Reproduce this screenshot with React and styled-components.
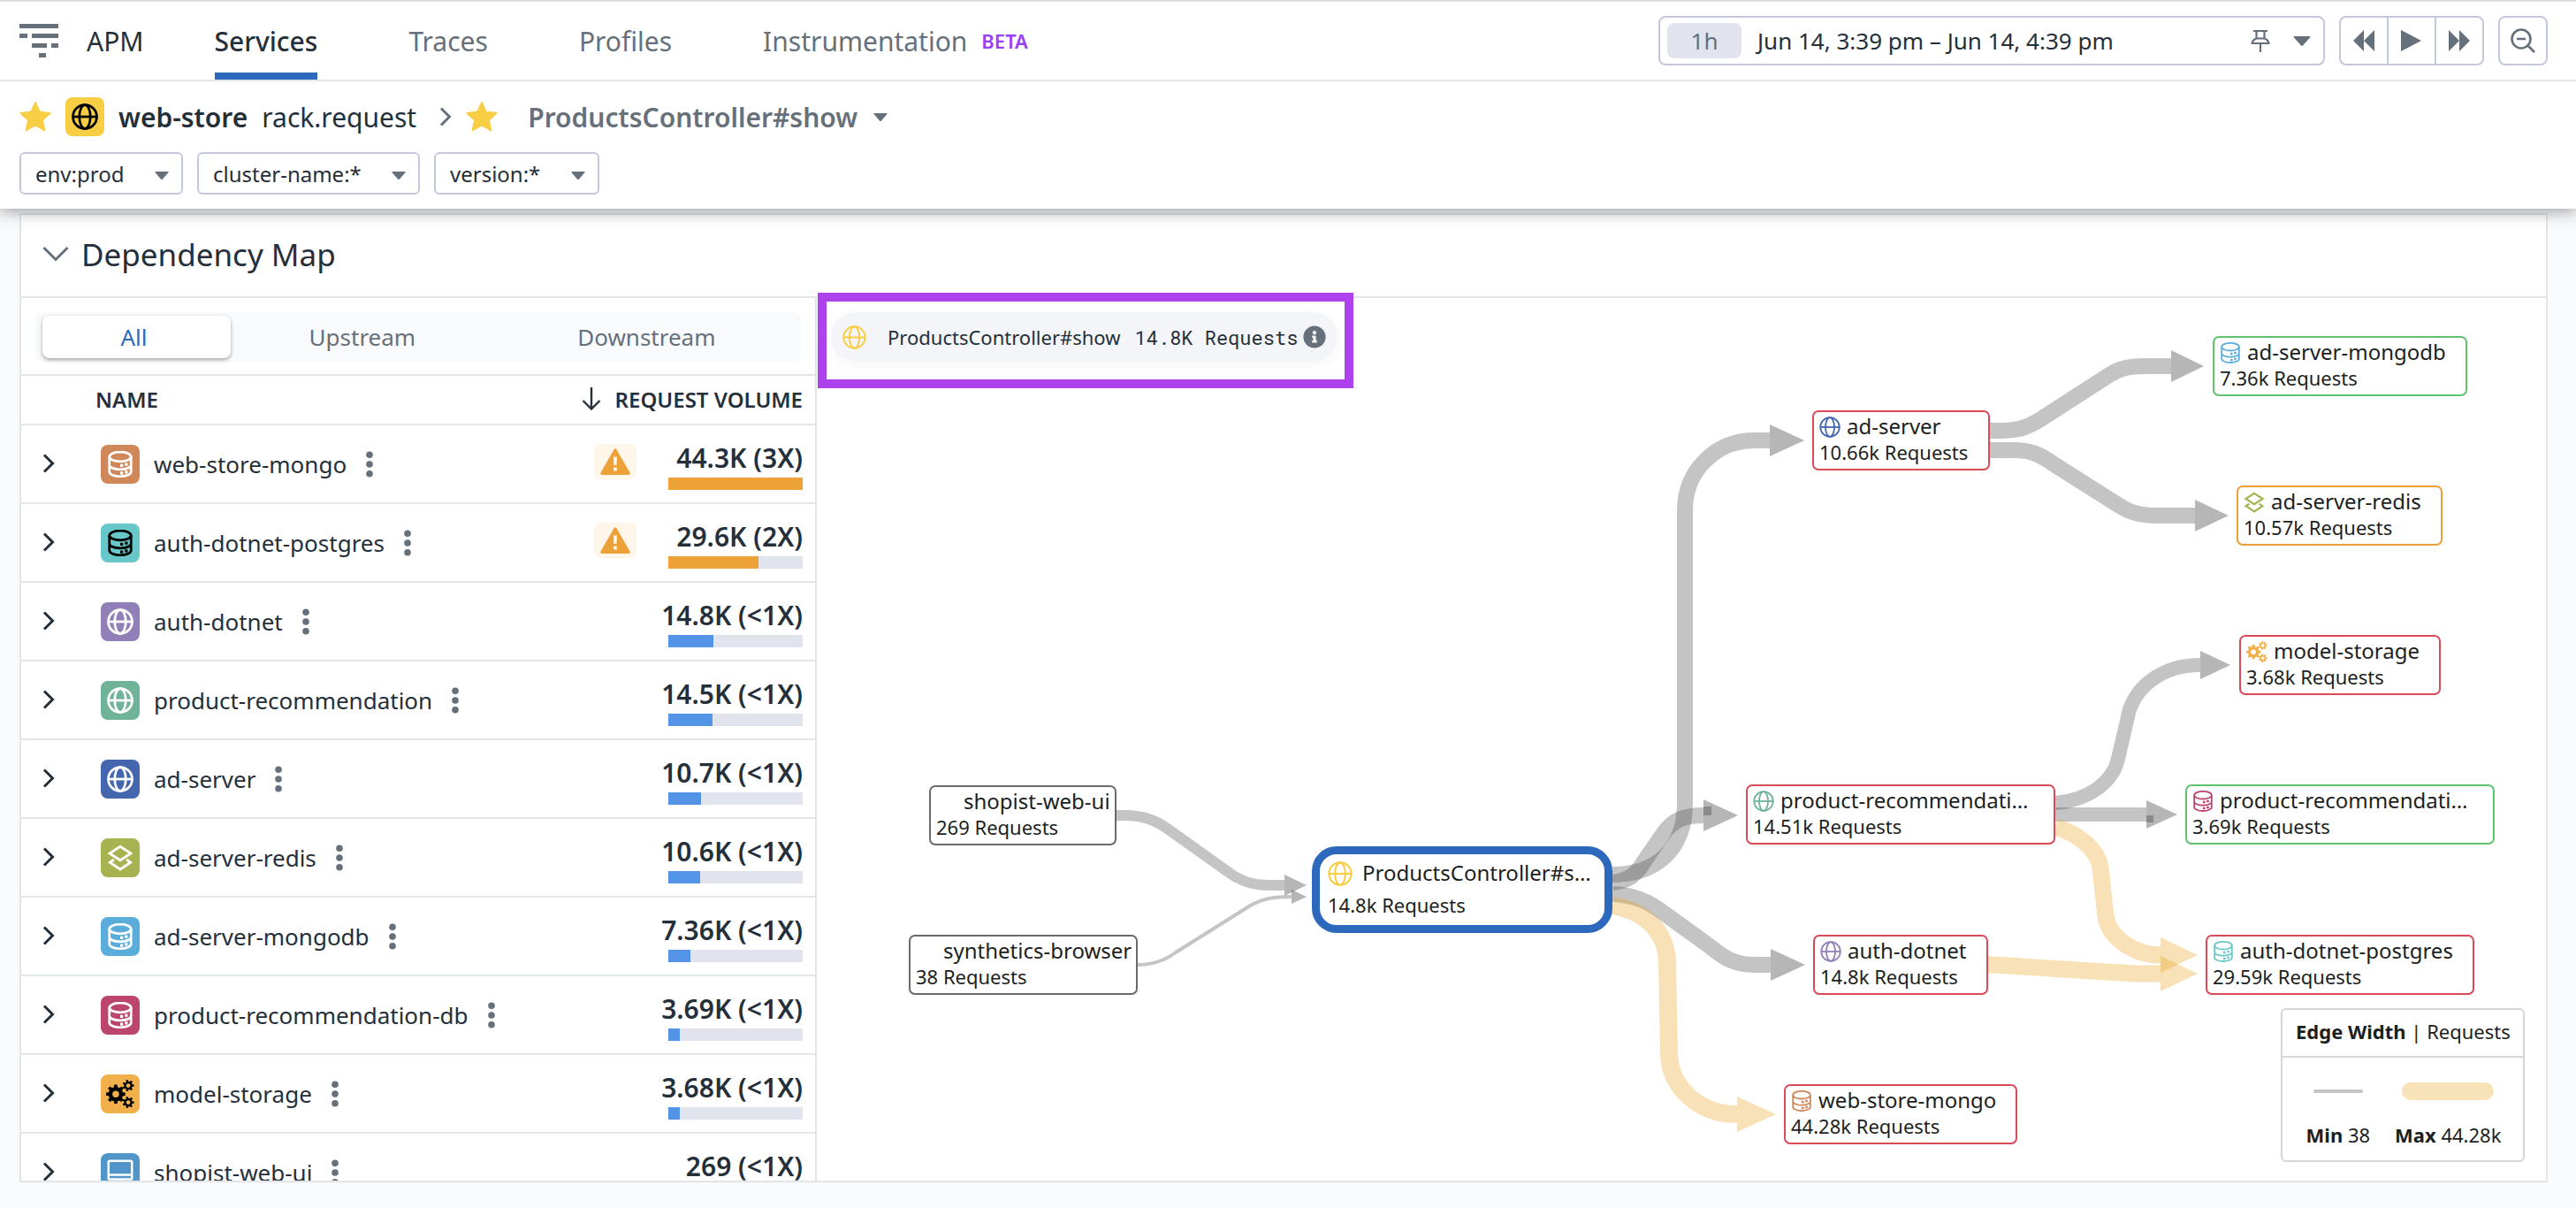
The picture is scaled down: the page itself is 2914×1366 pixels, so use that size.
import React, { useState } from "react";
import styled, { createGlobalStyle, css } from "styled-components";
import { FaInfoCircle } from "react-icons/fa";

const color = {
  text: "#242f3a",
  muted: "#66707a",
  line: "#e2e5ea",
  control: "#c3c8dc",
  track: "#e1e4ed",
  page: "#f9fafc",
  blue: "#2c69bd",
  bar: "#5394e6",
  amber: "#eca139",
  yellow: "#f8ce45",
};

const GlobalStyle = createGlobalStyle`
  *, *::before, *::after { box-sizing: border-box; }
  body {
    margin: 0;
    background: ${color.page};
    color: ${color.text};
    font-family: "Noto Sans", "Open Sans", sans-serif;
    font-size: 26px;
  }
  button, select { font: inherit; color: inherit; }
  button { padding: 0; border: 0; background: none; cursor: pointer; }
  h1, h2, p { margin: 0; font-weight: 400; }
  svg { display: block; flex: none; }
`;

/* ---------- icons ---------- */

const Icon = ({ size = 24, children, ...rest }) => (
  <svg width={size} height={size} viewBox="0 0 24 24" fill="none" aria-hidden="true" {...rest}>
    {children}
  </svg>
);

const Globe = ({ weight = 1.8, ...props }) => (
  <Icon {...props} stroke="currentColor" strokeWidth={weight}>
    <circle cx="12" cy="12" r="10.8" />
    <ellipse cx="12" cy="12" rx="5" ry="10.8" />
    <path d="M1.2 12h21.6" />
  </Icon>
);

const Database = ({ weight = 1.8, ...props }) => (
  <Icon {...props} stroke="currentColor" strokeWidth={weight}>
    <ellipse cx="12" cy="5.200" rx="9.800" ry="4.300" />
    <path d="M2.200 5.200v7.300c0 2.400 4.400 4.200 9.800 4.200s9.800-1.800 9.800-4.200V5.200" />
    <path d="M2.200 13.800v4.900c0 2.400 4.400 4.300 9.800 4.300s9.800-1.900 9.800-4.300v-4.900" />
    <path d="M12 11.700h2.600v2.600H12zM16.200 10.700h2.600v2.600h-2.600zM12 18.700h2.600v2.600H12zM16.200 17.700h2.600v2.600h-2.600z" fill="currentColor" stroke="none" />
  </Icon>
);

const Layers = ({ weight = 2.2, ...props }) => (
  <Icon {...props} stroke="currentColor" strokeWidth={weight}>
    <path d="M12 1.800 21.600 8 12 14.200 2.400 8z" />
    <path d="M6.400 13.600 2.600 16.200 12 22.400l9.400-6.200-3.800-2.600" />
  </Icon>
);

const gearPath = (cx, cy, outer, inner, hole, teeth) => {
  const points = [];
  const step = (Math.PI * 2) / teeth;
  for (let i = 0; i < teeth; i += 1) {
    [
      [-0.32, inner],
      [-0.2, outer],
      [0.2, outer],
      [0.32, inner],
    ].forEach(([turn, radius]) => {
      const angle = (i + turn) * step;
      points.push(`${(cx + Math.cos(angle) * radius).toFixed(2)} ${(cy + Math.sin(angle) * radius).toFixed(2)}`);
    });
  }
  return `M${points.join("L")}zM${cx - hole} ${cy}a${hole} ${hole} 0 1 0 ${hole * 2} 0a${hole} ${hole} 0 1 0 ${-hole * 2} 0z`;
};

const Gears = ({ weight, ...props }) => (
  <Icon {...props} fill="currentColor" fillRule="evenodd">
    <path d={gearPath(8.2, 12.2, 8.2, 6.2, 2.8, 8)} />
    <path d={gearPath(18.8, 4.9, 4.9, 3.5, 1.8, 7)} />
    <path d={gearPath(18.8, 19.2, 4.9, 3.5, 1.8, 7)} />
  </Icon>
);

const Monitor = ({ weight = 2, ...props }) => (
  <Icon {...props} stroke="currentColor" strokeWidth={weight}>
    <rect x="1.400" y="1.400" width="21.200" height="16.600" rx="1" />
    <path d="M1.400 14h21.200M12 18v4.500M7 22.500h10" />
  </Icon>
);

const Star = () => (
  <Icon size={36} fill={color.yellow} stroke={color.yellow} strokeWidth="1.200" strokeLinejoin="round">
    <path d="m12 1.200 3.200 7.100 8 .9-5.900 5.300 1.700 7.800-7-4-7 4 1.700-7.800L.8 9.200l8-.9z" />
  </Icon>
);

const Caret = ({ size = 16 }) => (
  <svg width={size} height={size / 2 + 1} viewBox="0 0 16 9" fill={color.muted} aria-hidden="true">
    <path d="M1 0h14q1 0 .5 1L9 8.400q-1 1-2 0L.5 1Q0 0 1 0z" />
  </svg>
);

const ChevronRight = ({ stroke = "currentColor" }) => (
  <svg width="14" height="22" viewBox="0 0 14 22" fill="none" stroke={stroke} strokeWidth="3" aria-hidden="true">
    <path d="m2 1.500 9.500 9.500L2 20.500" />
  </svg>
);

const ChevronDown = () => (
  <svg width="30" height="18" viewBox="0 0 30 18" fill="none" stroke={color.muted} strokeWidth="3" aria-hidden="true">
    <path d="m1.500 2 13.500 13.500L28.500 2" />
  </svg>
);

const TraceLogo = () => (
  <svg width="44" height="40" viewBox="0 0 44 40" fill={color.muted} aria-hidden="true">
    <path d="M0 1h44v5H0zM0 12h9v5H0zM14 12h30v5H14zM14 23h17v5H14zM36 23h8v5h-8zM22 34h8v5h-8z" />
  </svg>
);

const Pin = () => (
  <svg width="22" height="26" viewBox="0 0 22 26" fill="none" stroke={color.muted} strokeWidth="2.200" aria-hidden="true">
    <path d="M3 2h16M6.500 2v8.500M15.500 2v8.500M6.500 10.500C3 11.500 2 13.500 1.600 16h18.800c-.4-2.500-1.400-4.500-4.900-5.500M6.500 10.500h9M11 16v10" />
  </svg>
);

const Rewind = () => (
  <svg width="24" height="24" viewBox="0 0 24 24" fill="currentColor" aria-hidden="true">
    <path d="M12 0v24L0 12zM24 0v24L12 12z" />
  </svg>
);

const Play = () => (
  <svg width="24" height="24" viewBox="0 0 24 24" fill="currentColor" aria-hidden="true">
    <path d="M0 0v24l23-12z" />
  </svg>
);

const Forward = () => (
  <svg width="24" height="24" viewBox="0 0 24 24" fill="currentColor" aria-hidden="true">
    <path d="M0 0v24l12-12zM12 0v24l12-12z" />
  </svg>
);

const ZoomOut = () => (
  <svg width="28" height="28" viewBox="0 0 28 28" fill="none" stroke="currentColor" strokeWidth="2.600" aria-hidden="true">
    <circle cx="12" cy="12" r="10.500" />
    <path d="M7 12h10M19.500 19.500 27 27" />
  </svg>
);

const ArrowDown = () => (
  <svg width="22" height="26" viewBox="0 0 22 26" fill="none" stroke="currentColor" strokeWidth="2.400" aria-hidden="true">
    <path d="M11 0v24M1.500 15 11 24.500 20.500 15" />
  </svg>
);

const Dots = () => (
  <svg width="8" height="30" viewBox="0 0 8 30" fill={color.muted} aria-hidden="true">
    <circle cx="4" cy="4.200" r="3.800" />
    <circle cx="4" cy="15" r="3.800" />
    <circle cx="4" cy="25.800" r="3.800" />
  </svg>
);

const Warning = () => (
  <svg width="34" height="30" viewBox="0 0 34 30" aria-hidden="true">
    <path d="M15.600 1.200q1.400-2 2.800 0l15 26q1 2.600-1.400 2.800H2Q-.4 29.800.6 27.200z" fill={color.amber} />
    <path d="M15 9.500h4l-.4 9.500h-3.200zM15.200 21.500h3.600v4h-3.600z" fill="#fef6e9" />
  </svg>
);

const glyphs = {
  globe: Globe,
  database: Database,
  layers: Layers,
  gears: Gears,
  monitor: Monitor,
};

/* ---------- page frame ---------- */

const Page = styled.div`
  display: flex;
  flex-direction: column;
  height: 100vh;
  min-width: 1600px;
`;

const Header = styled.header`
  position: relative;
  z-index: 2;
  flex: none;
  background: #fff;
  border-top: 2px solid #ddd;
  box-shadow: 0 4px 16px rgba(0, 0, 0, 0.35);
`;

const NavBar = styled.div`
  display: flex;
  align-items: stretch;
  justify-content: space-between;
  height: 90px;
  padding: 0 32px 0 22px;
  border-bottom: 2px solid ${color.line};
`;

const NavLinks = styled.nav`
  display: flex;
  gap: 103px;
  font-size: 30px;
`;

const Brand = styled.div`
  display: flex;
  align-items: center;
  gap: 32px;
  margin-right: -23px;
`;

const NavLink = styled.a`
  display: flex;
  align-items: center;
  gap: 16px;
  color: ${(p) => (p.$active ? color.text : color.muted)};
  font-weight: ${(p) => (p.$active ? 500 : 400)};
  box-shadow: ${(p) => (p.$active ? `inset 0 -8px ${color.blue}` : "none")};
  text-decoration: none;
`;

const Beta = styled.span`
  color: #9741f5;
  font-size: 22px;
  font-weight: 600;
`;

const TimeControls = styled.div`
  display: flex;
  align-items: center;
  gap: 16px;
  color: ${color.muted};
`;

const controlBox = css`
  height: 56px;
  border: 2px solid ${color.control};
  border-radius: 8px;
  background: #fff;
`;

const TimeRange = styled.button`
  ${controlBox}
  display: flex;
  align-items: center;
  width: 754px;
  padding: 0 14px 0 8px;
  color: ${color.text};
`;

const Span = styled.span`
  display: flex;
  align-items: center;
  justify-content: center;
  width: 84px;
  height: 40px;
  margin-right: 18px;
  border-radius: 8px;
  background: ${color.track};
  color: ${color.muted};
`;

const RangeIcons = styled.span`
  display: flex;
  align-items: center;
  gap: 26px;
  margin-left: auto;
`;

const PlayerGroup = styled.div`
  ${controlBox}
  display: flex;
  overflow: hidden;
`;

const PlayerButton = styled.button`
  display: flex;
  align-items: center;
  justify-content: center;
  width: 52px;
  color: inherit;
  & + & {
    width: 54px;
    border-left: 2px solid ${color.control};
  }
`;

const ZoomButton = styled.button`
  ${controlBox}
  display: flex;
  align-items: center;
  justify-content: center;
  width: 56px;
`;

const TitleRow = styled.div`
  display: flex;
  align-items: center;
  height: 80px;
  padding: 0 22px;
  gap: 16px;
  font-size: 30px;
`;

const Service = styled.span`
  font-weight: 600;
`;

const Operation = styled.span`
  margin-right: 10px;
`;

const Resource = styled.h1`
  margin: 0 2px 0 18px;
  color: ${color.muted};
  font-size: 30px;
  font-weight: 600;
`;

const StarButton = styled.button`
  flex: none;
`;

const Tile = styled.span`
  display: flex;
  align-items: center;
  justify-content: center;
  flex: none;
  width: 44px;
  height: 44px;
  border-radius: 8px;
  background: ${(p) => p.$bg};
  color: ${(p) => (p.$dark ? "#000" : "#fff")};
`;

const Filters = styled.div`
  display: flex;
  gap: 16px;
  padding: 0 22px 16px;
`;

const FilterBox = styled.label`
  position: relative;
  display: block;
  height: 48px;
`;

const FilterSelect = styled.select`
  appearance: none;
  height: 48px;
  padding: 0 64px 0 16px;
  border: 2px solid ${color.control};
  border-radius: 6px;
  background: #fff;
  font-size: 24px;
`;

const FilterCaret = styled.span`
  position: absolute;
  top: 22px;
  right: 16px;
  pointer-events: none;
`;

/* ---------- dependency panel ---------- */

const Main = styled.main`
  display: flex;
  flex: 1;
  min-height: 0;
  padding: 5px 32px 29px 22px;
`;

const Panel = styled.section`
  display: flex;
  flex-direction: column;
  flex: 1;
  min-width: 0;
  border: 2px solid ${color.line};
  background: #fff;
`;

const PanelHeader = styled.div`
  display: flex;
  align-items: center;
  flex: none;
  gap: 14px;
  height: 94px;
  padding: 0 24px 4px;
  border-bottom: 2px solid ${color.line};
`;

const PanelTitle = styled.h2`
  font-size: 35px;
`;

const PanelBody = styled.div`
  display: grid;
  grid-template-columns: 900px 1fr;
  flex: 1;
  min-height: 0;
`;

const Side = styled.div`
  min-height: 0;
  overflow: hidden;
  border-right: 2px solid ${color.line};
`;

const SegmentBar = styled.div`
  padding: 16px;
  padding-bottom: 14px;
  border-bottom: 2px solid ${color.line};
`;

const Segments = styled.div`
  display: flex;
  padding: 4px 2px 4px 8px;
  border-radius: 8px;
  background: ${color.page};
`;

const Segment = styled.button`
  flex: 1 1 auto;
  height: 48px;
  padding-right: 6px;
  border-radius: 8px;
  color: ${color.muted};
  ${(p) =>
    p.$active &&
    css`
      background: #fff;
      color: ${color.blue};
      box-shadow: 0 2px 4px rgba(0, 0, 0, 0.35);
    `}
`;

const Table = styled.table`
  width: 100%;
  table-layout: fixed;
  border-collapse: separate;
  border-spacing: 0;
`;

const HeadCell = styled.th`
  height: 56px;
  padding: 0 ${(p) => (p.$end ? 14 : 0)}px 2px 0;
  border-bottom: 2px solid ${color.line};
  font-size: 24px;
  font-weight: 600;
  text-align: left;
`;

const SortLabel = styled.button`
  display: flex;
  align-items: center;
  justify-content: flex-end;
  gap: 16px;
  width: 100%;
  font-weight: 600;
`;

const Cell = styled.td`
  height: 89px;
  padding: 0 ${(p) => (p.$end ? 14 : 0)}px 0 ${(p) => p.$start || 0}px;
  border-bottom: 2px solid ${color.line};
`;

const NameCell = styled.div`
  display: flex;
  align-items: center;
  gap: 16px;
`;

const MenuButton = styled.button`
  margin-left: 6px;
`;

const WarningTile = styled.span`
  display: flex;
  align-items: center;
  justify-content: center;
  width: 48px;
  height: 40px;
  margin-left: auto;
  margin-bottom: 6px;
  border-radius: 8px;
  background: #fef6e9;
`;

const Volume = styled.div`
  font-size: 30px;
  font-weight: 600;
  line-height: 44px;
  text-align: right;
  white-space: nowrap;
`;

const Track = styled.div`
  width: 152px;
  height: 14px;
  margin-left: auto;
  background: ${color.track};
`;

const Fill = styled.div`
  height: 14px;
  background: ${(p) => (p.$warn ? color.amber : color.bar)};
`;

/* ---------- map ---------- */

const Map = styled.div`
  position: relative;
  min-width: 0;
`;

const Edges = styled.svg`
  position: absolute;
  top: 0;
  left: 0;
`;

const Highlight = styled.div`
  position: absolute;
  top: -6px;
  left: 1px;
  z-index: 1;
  padding: 12px 8px 20px 5px;
  border: 10px solid #ae42ed;
  background: #fff;
`;

const Pill = styled.div`
  display: flex;
  align-items: center;
  height: 56px;
  padding: 0 13px;
  border-radius: 28px;
  background: #f4f5f9;
  box-shadow: 0 4px 16px rgba(0, 0, 0, 0.04);
  font-size: 22px;
  white-space: nowrap;
`;

const PillName = styled.span`
  margin: 0 16px 0 24px;
`;

const PillCount = styled.span`
  margin-right: 6px;
  font-family: "Roboto Mono", "DejaVu Sans Mono", monospace;
`;

const tones = { neutral: "#6a6a6a", ok: "#5fc26e", warn: "#eba035", alert: "#d94a57" };

const Node = styled.button`
  position: absolute;
  left: ${(p) => p.$x}px;
  top: ${(p) => p.$y}px;
  display: flex;
  flex-direction: column;
  justify-content: flex-start;
  align-items: flex-start;
  width: ${(p) => p.$w}px;
  height: 68px;
  padding-left: 6px;
  border: 2px solid ${(p) => tones[p.$tone]};
  border-radius: 7px;
  background: #fff;
  color: #1c1f22;
  white-space: nowrap;
  ${(p) =>
    p.$focus &&
    css`
      height: 98px;
      padding-left: 9px;
      border: 9px solid ${color.blue};
      border-radius: 28px;
    `}
`;

const NodeTitle = styled.span`
  display: flex;
  align-items: center;
  gap: ${(p) => (p.$focus ? 11 : 7)}px;
  height: ${(p) => (p.$focus ? 40 : 30)}px;
  font-size: 24px;
`;

const NodeIcon = styled.span`
  flex: none;
  width: ${(p) => (p.$focus ? 28 : 24)}px;
  margin-top: 4px;
  color: ${(p) => p.$color};
`;

const NodeCount = styled.span`
  font-size: 22px;
  line-height: ${(p) => (p.$focus ? 34 : 30)}px;
`;

const Legend = styled.div`
  position: absolute;
  right: 24px;
  bottom: 21px;
  width: 276px;
  border: 2px solid #d5d5d5;
  border-radius: 6px;
  background: #fff;
  color: #1c1f22;
  font-size: 22px;
`;

const LegendTitle = styled.p`
  height: 54px;
  padding-left: 15px;
  border-bottom: 2px solid #d5d5d5;
  line-height: 48px;
  white-space: nowrap;
`;

const LegendItems = styled.div`
  display: flex;
  gap: 28px;
  padding: 28px 23px 14px 25px;
  justify-content: center;
`;

const LegendItem = styled.div`
  display: flex;
  flex-direction: column;
  align-items: center;
  gap: 24px;
  white-space: nowrap;
`;

const Swatch = styled.span`
  display: flex;
  align-items: center;
  height: 20px;
  &::before {
    content: "";
    width: ${(p) => (p.$max ? 104 : 56)}px;
    height: ${(p) => (p.$max ? 20 : 4)}px;
    border-radius: 10px;
    background: ${(p) => (p.$max ? "#f8e2b7" : "#c4c4c4")};
  }
`;

/* ---------- data ---------- */

const navItems = [
  { label: "Services", active: true },
  { label: "Traces" },
  { label: "Profiles" },
  { label: "Instrumentation", beta: true },
];

const filters = ["env:prod", "cluster-name:*", "version:*"];

const rows = [
  { name: "web-store-mongo", icon: "database", bg: "#d0875a", volume: "44.3K (3X)", share: 100, warn: true },
  { name: "auth-dotnet-postgres", icon: "database", bg: "#68c8c9", dark: true, volume: "29.6K (2X)", share: 66.8, warn: true },
  { name: "auth-dotnet", icon: "globe", bg: "#9180b8", volume: "14.8K (<1X)", share: 33.4 },
  { name: "product-recommendation", icon: "globe", bg: "#6fb398", volume: "14.5K (<1X)", share: 32.7 },
  { name: "ad-server", icon: "globe", bg: "#4466ae", volume: "10.7K (<1X)", share: 24.1 },
  { name: "ad-server-redis", icon: "layers", bg: "#a7b250", volume: "10.6K (<1X)", share: 23.9 },
  { name: "ad-server-mongodb", icon: "database", bg: "#5aaddb", volume: "7.36K (<1X)", share: 16.6 },
  { name: "product-recommendation-db", icon: "database", bg: "#bc456e", volume: "3.69K (<1X)", share: 8.4 },
  { name: "model-storage", icon: "gears", bg: "#f1b04b", dark: true, volume: "3.68K (<1X)", share: 8.3 },
  { name: "shopist-web-ui", icon: "monitor", bg: "#5195c9", volume: "269 (<1X)", share: 1 },
];

const nodes = [
  { name: "shopist-web-ui", count: "269", x: 127, y: 551, w: 212, tone: "neutral" },
  { name: "synthetics-browser", count: "38", x: 104, y: 720, w: 259, tone: "neutral" },
  { name: "ProductsController#s…", count: "14.8k", x: 560, y: 620, w: 340, icon: "globe", fg: color.yellow, focus: true },
  { name: "ad-server", count: "10.66k", x: 1126, y: 127, w: 201, tone: "alert", icon: "globe", fg: "#4466ae" },
  { name: "ad-server-mongodb", count: "7.36k", x: 1579, y: 43, w: 288, tone: "ok", icon: "database", fg: "#5aaddb" },
  { name: "ad-server-redis", count: "10.57k", x: 1606, y: 212, w: 233, tone: "warn", icon: "layers", fg: "#a7b250" },
  { name: "model-storage", count: "3.68k", x: 1609, y: 381, w: 228, tone: "alert", icon: "gears", fg: "#f1b04b" },
  { name: "product-recommendati…", count: "14.51k", x: 1051, y: 550, w: 350, tone: "alert", icon: "globe", fg: "#6fb398" },
  { name: "product-recommendati…", count: "3.69k", x: 1548, y: 550, w: 350, tone: "ok", icon: "database", fg: "#bc456e" },
  { name: "auth-dotnet", count: "14.8k", x: 1127, y: 720, w: 198, tone: "alert", icon: "globe", fg: "#9180b8" },
  { name: "auth-dotnet-postgres", count: "29.59k", x: 1571, y: 720, w: 304, tone: "alert", icon: "database", fg: "#68c8c9" },
  { name: "web-store-mongo", count: "44.28k", x: 1094, y: 889, w: 264, tone: "alert", icon: "database", fg: "#d0875a" },
];

/* Edge geometry shares one coordinate space whose origin is offset by the view box. */
const edges = [
  { w: 12, d: "M1263 922h9c22 0 36 6 50 16l66 47c14 11 28 16 48 16h17", head: [1453, 1478, 1001, 12] },
  { w: 4, d: "M1286 1091c19 0 32-5 44-14l78-49c14-10 28-14 53-14", head: [1461, 1478, 1014, 8] },
  { w: 18, d: "M1824 989C1872 989 1906 962 1906 908V577C1906 533 1940 498 1985 498H2002", head: [2002, 2041, 498, 18] },
  { w: 18, d: "M1824 998C1842 996 1850 990 1860 974L1882 942C1892 928 1904 922 1927 922", head: [1927, 1966, 922, 18] },
  { w: 18, d: "M1824 1011C1848 1012 1864 1019 1880 1031L1934 1070C1950 1083 1962 1091 1984 1091H2003", head: [2003, 2042, 1091, 18] },
  { w: 20, amber: true, d: "M1824 1024C1862 1030 1886 1055 1886 1090L1888 1192C1889 1228 1920 1260 1965 1260", head: [1965, 2009, 1260, 20] },
  { w: 18, d: "M2250 487H2266C2284 487 2296 482 2310 473L2386 424C2398 416 2410 414 2428 414H2456", head: [2456, 2493, 414, 18] },
  { w: 18, d: "M2250 509H2280C2296 509 2308 514 2322 524L2396 571C2410 580 2422 583 2441 583H2483", head: [2483, 2521, 583, 18] },
  { w: 16, d: "M2325 908C2362 905 2390 885 2396 858L2409 802C2420 772 2450 752 2489 752", head: [2489, 2523, 752, 16] },
  { w: 16, d: "M2325 921H2428", head: [2428, 2463, 921, 16] },
  { w: 19, amber: true, d: "M2325 935C2352 943 2374 962 2376 982L2382 1036C2386 1062 2416 1080 2444 1080", head: [2444, 2486, 1080, 20] },
  { w: 19, amber: true, d: "M2249 1091H2255L2415 1101H2444", head: [2444, 2486, 1101, 20] },
];

const EdgeLayer = () => (
  <Edges width="1956" height="998" viewBox="924 337 1956 998" aria-hidden="true">
    {edges.map(({ w, d, amber, head: [x, tip, y, half] }) => (
      <g key={d}>
        <path d={d} fill="none" stroke={amber ? "#e9a11c" : "#484848"} strokeOpacity=".32" strokeWidth={w} />
        <path
          d={`M${x} ${y - half}L${tip} ${y}L${x} ${y + half}z`}
          fill={amber ? "#e9a11c" : "#484848"}
          fillOpacity={amber ? 0.32 : 0.4}
        />
      </g>
    ))}
    <path d="M1927 912h9v10h-9zM2428 922h8v8h-8z" fill="#484848" fillOpacity=".4" />
  </Edges>
);

/* ---------- views ---------- */

const ServiceRow = ({ name, icon, bg, dark, volume, share, warn }) => {
  const Glyph = glyphs[icon];
  return (
    <tr>
      <Cell $start={24}>
        <button aria-label={`Expand ${name}`}>
          <ChevronRight />
        </button>
      </Cell>
      <Cell $start={6}>
        <NameCell>
          <Tile $bg={bg} $dark={dark}>
            <Glyph size={icon === "gears" ? 32 : 30} weight={icon === "monitor" ? 2 : 2.2} />
          </Tile>
          {name}
          <MenuButton aria-label={`Options for ${name}`}>
            <Dots />
          </MenuButton>
        </NameCell>
      </Cell>
      <Cell $end>
        {warn && (
          <WarningTile>
            <Warning />
          </WarningTile>
        )}
      </Cell>
      <Cell $end>
        <Volume>{volume}</Volume>
        <Track>
          <Fill $warn={warn} style={{ width: `${share}%` }} />
        </Track>
      </Cell>
    </tr>
  );
};

const MapNode = ({ name, count, x, y, w, tone, icon, fg, focus }) => {
  const Glyph = glyphs[icon];
  return (
    <Node $x={x} $y={y} $w={w} $tone={tone} $focus={focus}>
      <NodeTitle $focus={focus}>
        <NodeIcon $color={fg} $focus={focus}>
          {Glyph && <Glyph size={focus ? 28 : 24} />}
        </NodeIcon>
        {name}
      </NodeTitle>
      <NodeCount $focus={focus}>{count} Requests</NodeCount>
    </Node>
  );
};

export default function App() {
  const [scope, setScope] = useState("All");
  return (
    <Page>
      <GlobalStyle />
      <Header>
        <NavBar>
          <NavLinks>
            <Brand>
              <TraceLogo />
              APM
            </Brand>
            {navItems.map(({ label, active, beta }) => (
              <NavLink key={label} href="#" $active={active}>
                {label}
                {beta && <Beta>BETA</Beta>}
              </NavLink>
            ))}
          </NavLinks>
          <TimeControls>
            <TimeRange>
              <Span>1h</Span>
              Jun 14, 3:39 pm – Jun 14, 4:39 pm
              <RangeIcons>
                <Pin />
                <Caret size={20} />
              </RangeIcons>
            </TimeRange>
            <PlayerGroup>
              <PlayerButton aria-label="Back">
                <Rewind />
              </PlayerButton>
              <PlayerButton aria-label="Play">
                <Play />
              </PlayerButton>
              <PlayerButton aria-label="Forward">
                <Forward />
              </PlayerButton>
            </PlayerGroup>
            <ZoomButton aria-label="Zoom out">
              <ZoomOut />
            </ZoomButton>
          </TimeControls>
        </NavBar>
        <TitleRow>
          <StarButton aria-label="Favorite service">
            <Star />
          </StarButton>
          <Tile $bg={color.yellow} $dark>
            <Globe size={30} weight={2.2} />
          </Tile>
          <Service>web-store</Service>
          <Operation>rack.request</Operation>
          <ChevronRight stroke={color.muted} />
          <StarButton aria-label="Favorite resource">
            <Star />
          </StarButton>
          <Resource>ProductsController#show</Resource>
          <Caret />
        </TitleRow>
        <Filters>
          {filters.map((value) => (
            <FilterBox key={value}>
              <FilterSelect aria-label={value.split(":")[0]}>
                <option>{value}</option>
              </FilterSelect>
              <FilterCaret>
                <Caret />
              </FilterCaret>
            </FilterBox>
          ))}
        </Filters>
      </Header>
      <Main>
        <Panel>
          <PanelHeader>
            <button aria-label="Collapse">
              <ChevronDown />
            </button>
            <PanelTitle>Dependency Map</PanelTitle>
          </PanelHeader>
          <PanelBody>
            <Side>
              <SegmentBar>
                <Segments>
                  {["All", "Upstream", "Downstream"].map((label) => (
                    <Segment key={label} $active={scope === label} onClick={() => setScope(label)}>
                      {label}
                    </Segment>
                  ))}
                </Segments>
              </SegmentBar>
              <Table>
                <colgroup>
                  <col width="84" />
                  <col />
                  <col width="90" />
                  <col width="188" />
                </colgroup>
                <thead>
                  <tr>
                    <HeadCell aria-label="Expand" />
                    <HeadCell>NAME</HeadCell>
                    <HeadCell colSpan={2} $end>
                      <SortLabel>
                        <ArrowDown />
                        REQUEST VOLUME
                      </SortLabel>
                    </HeadCell>
                  </tr>
                </thead>
                <tbody>
                  {rows.map((row) => (
                    <ServiceRow key={row.name} {...row} />
                  ))}
                </tbody>
              </Table>
            </Side>
            <Map>
              <EdgeLayer />
              {nodes.map((node) => (
                <MapNode key={node.name + node.count} {...node} />
              ))}
              <Highlight>
                <Pill>
                  <Globe size={27} color={color.yellow} />
                  <PillName>ProductsController#show</PillName>
                  <PillCount>14.8K Requests</PillCount>
                  <FaInfoCircle size={26} color={color.muted} />
                </Pill>
              </Highlight>
              <Legend>
                <LegendTitle>
                  <b>Edge Width</b> | Requests
                </LegendTitle>
                <LegendItems>
                  <LegendItem>
                    <Swatch />
                    <span>
                      <b>Min</b> 38
                    </span>
                  </LegendItem>
                  <LegendItem>
                    <Swatch $max />
                    <span>
                      <b>Max</b> 44.28k
                    </span>
                  </LegendItem>
                </LegendItems>
              </Legend>
            </Map>
          </PanelBody>
        </Panel>
      </Main>
    </Page>
  );
}
